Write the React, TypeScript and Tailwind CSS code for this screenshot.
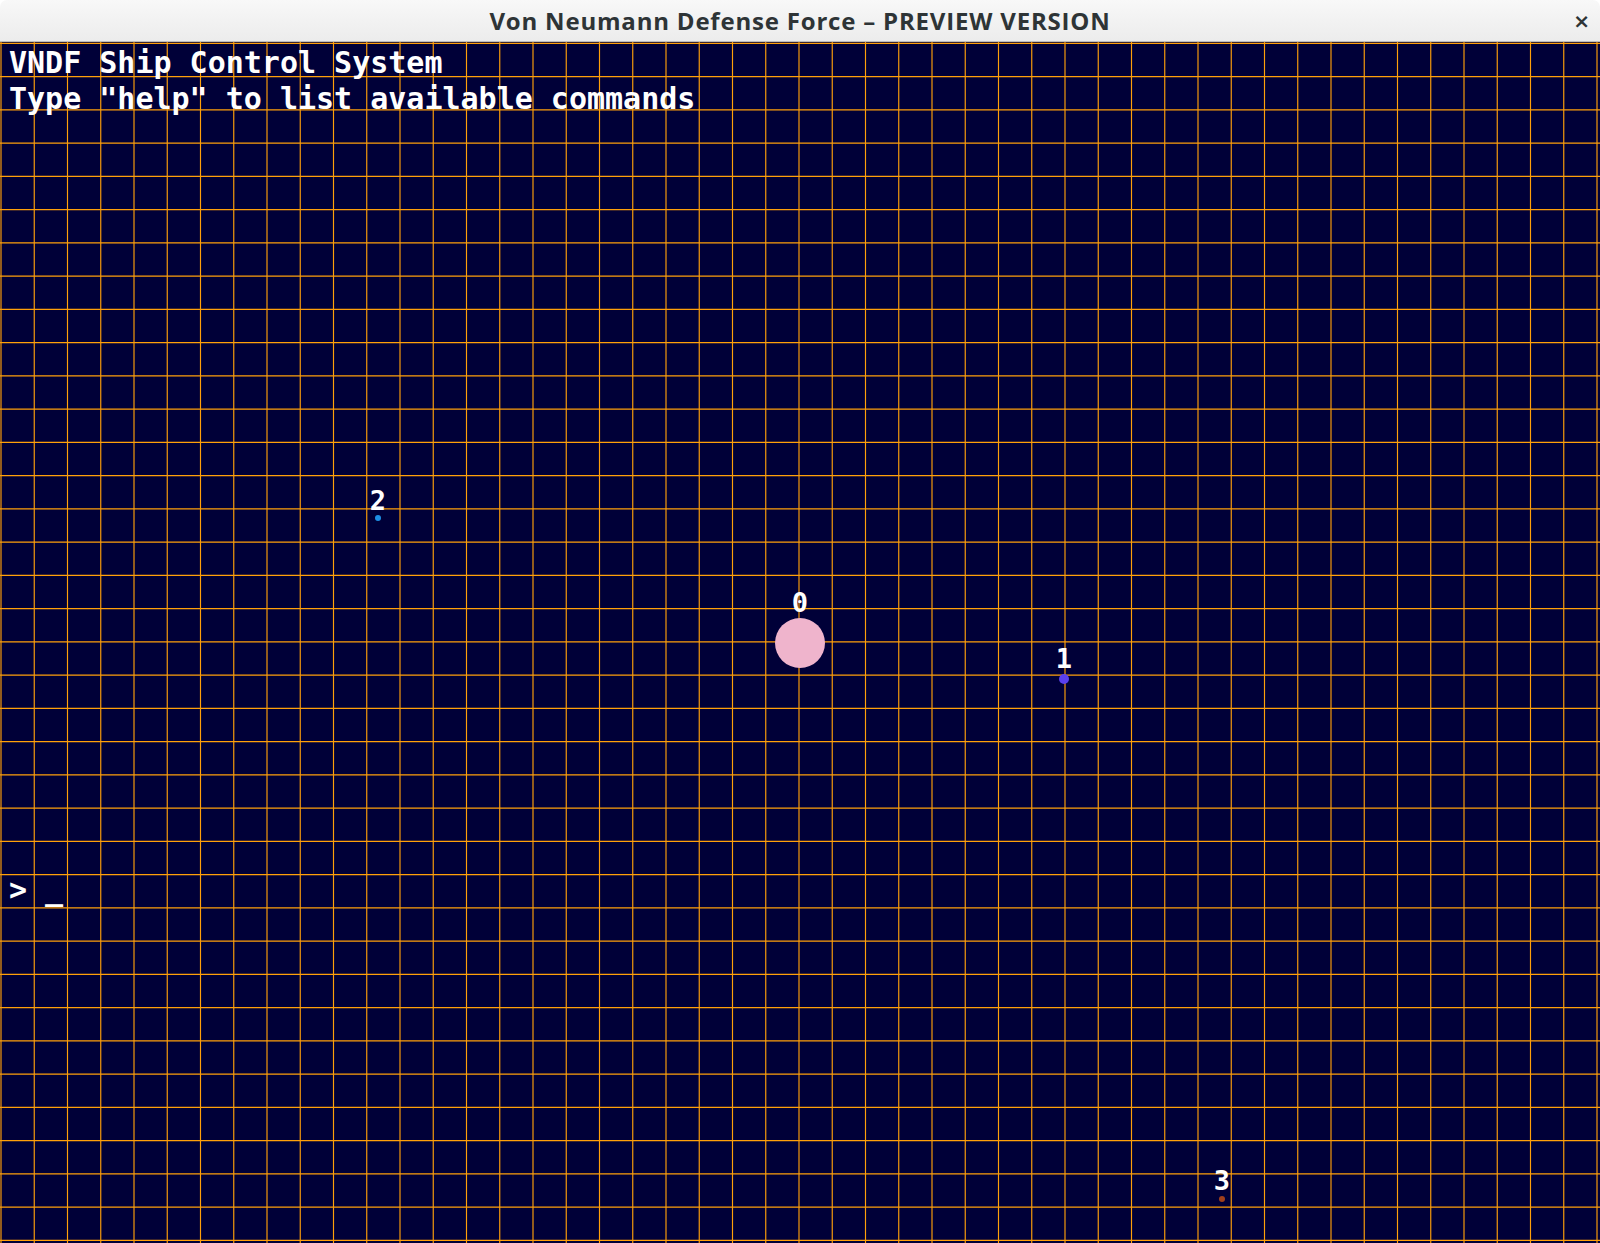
const GRID_STEP = 33.25
const MAP_HEIGHT = 1201

const cols = Array.from({ length: 49 }, (_, k) => 1 + GRID_STEP * k)
const rows = Array.from({ length: 37 }, (_, k) => 1.3 + GRID_STEP * k)

// positions are in map coords (map starts 42px below page top)
const bodies = [
  { id: '0', x: 800, y: 601, r: 25, color: '#efb4cc', labelBottom: 570 },
  { id: '1', x: 1064, y: 637, r: 5, color: '#5a40ee', labelBottom: 626 },
  { id: '2', x: 378, y: 476, r: 3, color: '#1d8fe4', labelBottom: 468 },
  { id: '3', x: 1222, y: 1157, r: 3, color: '#a0401c', labelBottom: 1148 },
]

function GridLayer() {
  return (
    <svg className="absolute inset-0" width={1600} height={MAP_HEIGHT}>
      {cols.map((x) => (
        <line key={'c' + x} x1={x} y1={0} x2={x} y2={MAP_HEIGHT} stroke="#ffa00a" strokeWidth={1.15} />
      ))}
      {rows.map((y) => (
        <line key={'r' + y} x1={0} y1={y} x2={1600} y2={y} stroke="#ffa00a" strokeWidth={1.15} />
      ))}
      {bodies.map((b) => (
        <circle key={b.id} cx={b.x} cy={b.y} r={b.r} fill={b.color} />
      ))}
    </svg>
  )
}

function BodyLabel({ id, x, labelBottom }: { id: string; x: number; labelBottom: number }) {
  return (
    <div
      className="absolute w-10 -ml-5 text-center text-[27px] leading-[27px] font-bold text-white"
      style={{ left: x, top: labelBottom - 23, fontFamily: '"DejaVu Sans Mono", monospace' }}
    >
      {id}
    </div>
  )
}

export default function App() {
  return (
    <div className="w-[1600px] h-[1243px] overflow-hidden bg-white">
      {/* Title bar */}
      <div className="relative flex h-[42px] items-center justify-center rounded-t-[7px] border-b border-[#bdbdbd] bg-gradient-to-b from-[#f8f8f8] to-[#ececec]">
        <span className="text-[24px] font-bold text-[#2e3436] font-['Open_Sans',sans-serif] tracking-[0.8px]">
          Von Neumann Defense Force – PREVIEW VERSION
        </span>
        <span className="absolute right-[10px] top-[12px] text-[20px] leading-[18px] font-bold text-[#2e3436] font-['DejaVu_Sans',sans-serif]">
          ×
        </span>
      </div>

      {/* Map / console */}
      <div className="relative h-[1201px] bg-[#000038]">
        <GridLayer />
        {bodies.map((b) => (
          <BodyLabel key={b.id} id={b.id} x={b.x} labelBottom={b.labelBottom} />
        ))}
        <div className="relative pl-[9px] pt-[3px] text-[30px] leading-[36px] font-bold text-white whitespace-pre font-['DejaVu_Sans_Mono',monospace]">
          <div>VNDF Ship Control System</div>
          <div>Type "help" to list available commands</div>
          <div className="mt-[755px]">&gt; _</div>
        </div>
      </div>
    </div>
  )
}
